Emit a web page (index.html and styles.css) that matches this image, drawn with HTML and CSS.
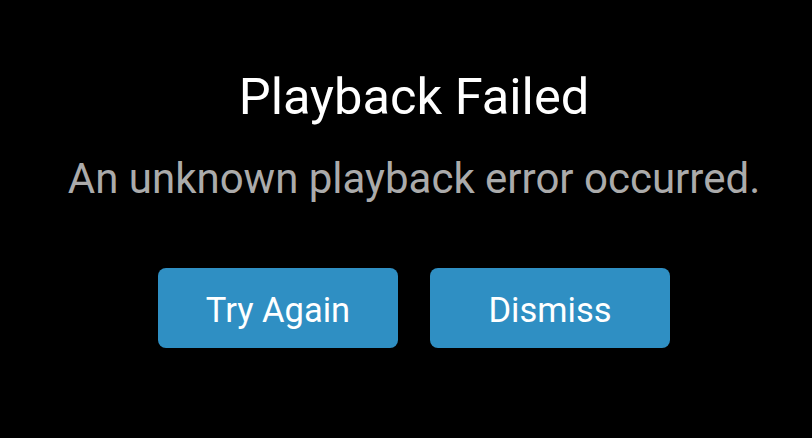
FILE: index.html
```html
<!DOCTYPE html>
<html>
<head>
<meta charset="utf-8">
<link rel="stylesheet" href="styles.css">
</head>
<body>
<div class="dialog">
  <h1 class="title">Playback Failed</h1>
  <p class="message">An unknown playback error occurred.</p>
  <div class="actions">
    <button class="btn">Try Again</button>
    <button class="btn">Dismiss</button>
  </div>
</div>
</body>
</html>
```
FILE: styles.css
```css
html, body {
  margin: 0;
  padding: 0;
  background: #000;
  width: 812px;
  height: 438px;
  overflow: hidden;
}
.dialog {
  display: flex;
  flex-direction: column;
  align-items: center;
  padding-top: 67px;
  padding-left: 16px;
  font-family: Roboto, sans-serif;
}
.title {
  margin: 0;
  font-size: 50.6px;
  font-weight: 400;
  line-height: 60px;
  color: #fff;
}
.message {
  margin: 27px 0 0;
  font-size: 42px;
  line-height: 50px;
  color: #ababab;
}
.actions {
  display: flex;
  gap: 32px;
  margin-top: 64px;
}
.btn {
  width: 240px;
  height: 80px;
  border: none;
  border-radius: 8px;
  background: #2f8fc3;
  color: #fff;
  font-family: Roboto, sans-serif;
  font-size: 34.5px;
  padding: 3px 0 0;
}
```
